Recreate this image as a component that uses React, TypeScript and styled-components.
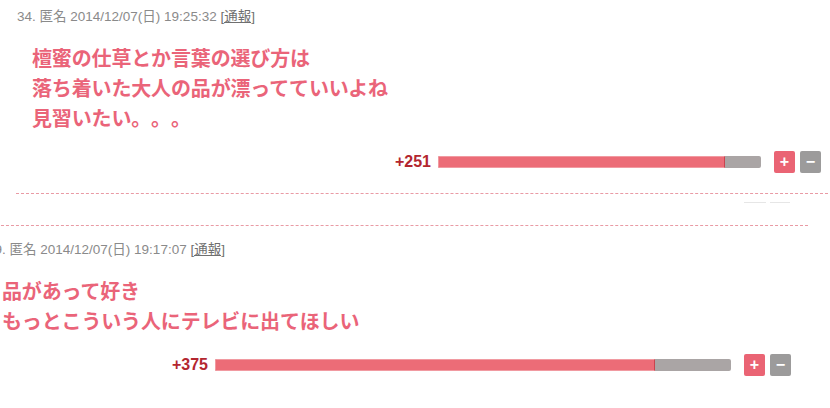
import React from "react";
import styled, { createGlobalStyle } from "styled-components";

const Global = createGlobalStyle`
  html, body { margin: 0; padding: 0; background: #fff; }
  body { overflow: hidden; width: 830px; height: 408px; }
`;

const List = styled.div`
  margin-top: -8px;
  display: flex;
  flex-direction: column;
`;

const Comment = styled.section<{ $shift: number; $last?: boolean }>`
  width: 822px;
  margin-left: ${(p) => p.$shift}px;
  border-top: 1px dashed #e99aa4;
  border-bottom: ${(p) => (p.$last ? "none" : "1px dashed #e99aa4")};
  padding: 14px 0 20px;
  box-sizing: border-box;
`;

const Header = styled.div`
  padding-left: 1px;
  font-family: "Liberation Sans", "Noto Sans CJK JP", sans-serif;
  font-size: 13.5px;
  line-height: 20px;
  color: #8a8a8a;
  white-space: nowrap;
`;

const Report = styled.a`
  color: #6f6f6f;
  text-decoration: underline;
`;

const Body = styled.p`
  margin: 16px 0 0 16px;
  font-family: "Noto Sans CJK JP", sans-serif;
  font-weight: 700;
  font-size: 20px;
  line-height: 30px;
  color: #ea6479;
  letter-spacing: -0.15px;
  white-space: pre-line;
  text-spacing-trim: space-all;
`;

const VoteRow = styled.div`
  margin-top: 18px;
  display: flex;
  align-items: center;
  justify-content: flex-end;
  padding-right: 17px;
  height: 22px;
`;

const Score = styled.span`
  font-family: "Liberation Sans", sans-serif;
  font-weight: 700;
  font-size: 16px;
  color: #b3262f;
  margin-right: 7px;
`;

const Bar = styled.div<{ $w: number }>`
  width: ${(p) => p.$w}px;
  height: 12px;
  background: #aaa5a5;
  border-radius: 2px;
  overflow: hidden;
  display: flex;
  margin-right: 13px;
`;

const Fill = styled.div`
  height: 100%;
  background: #ec6c77;
  box-sizing: border-box;
  border: 1px solid #f19aa1;
  border-right: 1px solid #c9444f;
`;

const Btn = styled.button<{ $plus?: boolean }>`
  width: 21px;
  height: 22px;
  padding: 0;
  border: none;
  border-radius: 2px;
  background: ${(p) => (p.$plus ? "#ea6474" : "#9c9b9b")};
  color: #fff;
  font-family: "Liberation Sans", sans-serif;
  font-weight: 700;
  font-size: 16px;
  line-height: 22px;
  display: flex;
  align-items: center;
  justify-content: center;
  & + & { margin-left: 5px; }
`;

const Gap = styled.div`
  height: 31px;
  display: flex;
  justify-content: flex-end;
  padding-right: 40px;
  padding-top: 8px;
  box-sizing: border-box;
  gap: 4px;
`;

const Faint = styled.div<{ $w: number }>`
  width: ${(p) => p.$w}px;
  height: 1px;
  background: #e6e6e6;
`;

type C = {
  no: string;
  date: string;
  text: string;
  score: string;
  bar: number;
  ratio: number;
  shift: number;
};

const comments: C[] = [
  {
    no: "34.",
    date: "2014/12/07(日) 19:25:32",
    text: "檀蜜の仕草とか言葉の選び方は\n落ち着いた大人の品が漂ってていいよね\n見習いたい。。。",
    score: "+251",
    bar: 323,
    ratio: 0.889,
    shift: 16,
  },
  {
    no: "39.",
    date: "2014/12/07(日) 19:17:07",
    text: "品があって好き\nもっとこういう人にテレビに出てほしい",
    score: "+375",
    bar: 516,
    ratio: 0.853,
    shift: -14,
  },
];

export default function App() {
  return (
    <>
      <Global />
      <List>
        {comments.map((c, i) => (
          <React.Fragment key={c.no}>
            {i > 0 && (
              <Gap>
                <Faint $w={22} />
                <Faint $w={20} />
              </Gap>
            )}
            <Comment $shift={c.shift} $last={i === comments.length - 1}>
              <Header>
                {c.no} 匿名 {c.date} <Report>[通報]</Report>
              </Header>
              <Body>{c.text}</Body>
              <VoteRow>
                <Score>{c.score}</Score>
                <Bar $w={c.bar}>
                  <Fill style={{ width: `${c.ratio * 100}%` }} />
                </Bar>
                <Btn $plus>+</Btn>
                <Btn>−</Btn>
              </VoteRow>
            </Comment>
          </React.Fragment>
        ))}
      </List>
    </>
  );
}
